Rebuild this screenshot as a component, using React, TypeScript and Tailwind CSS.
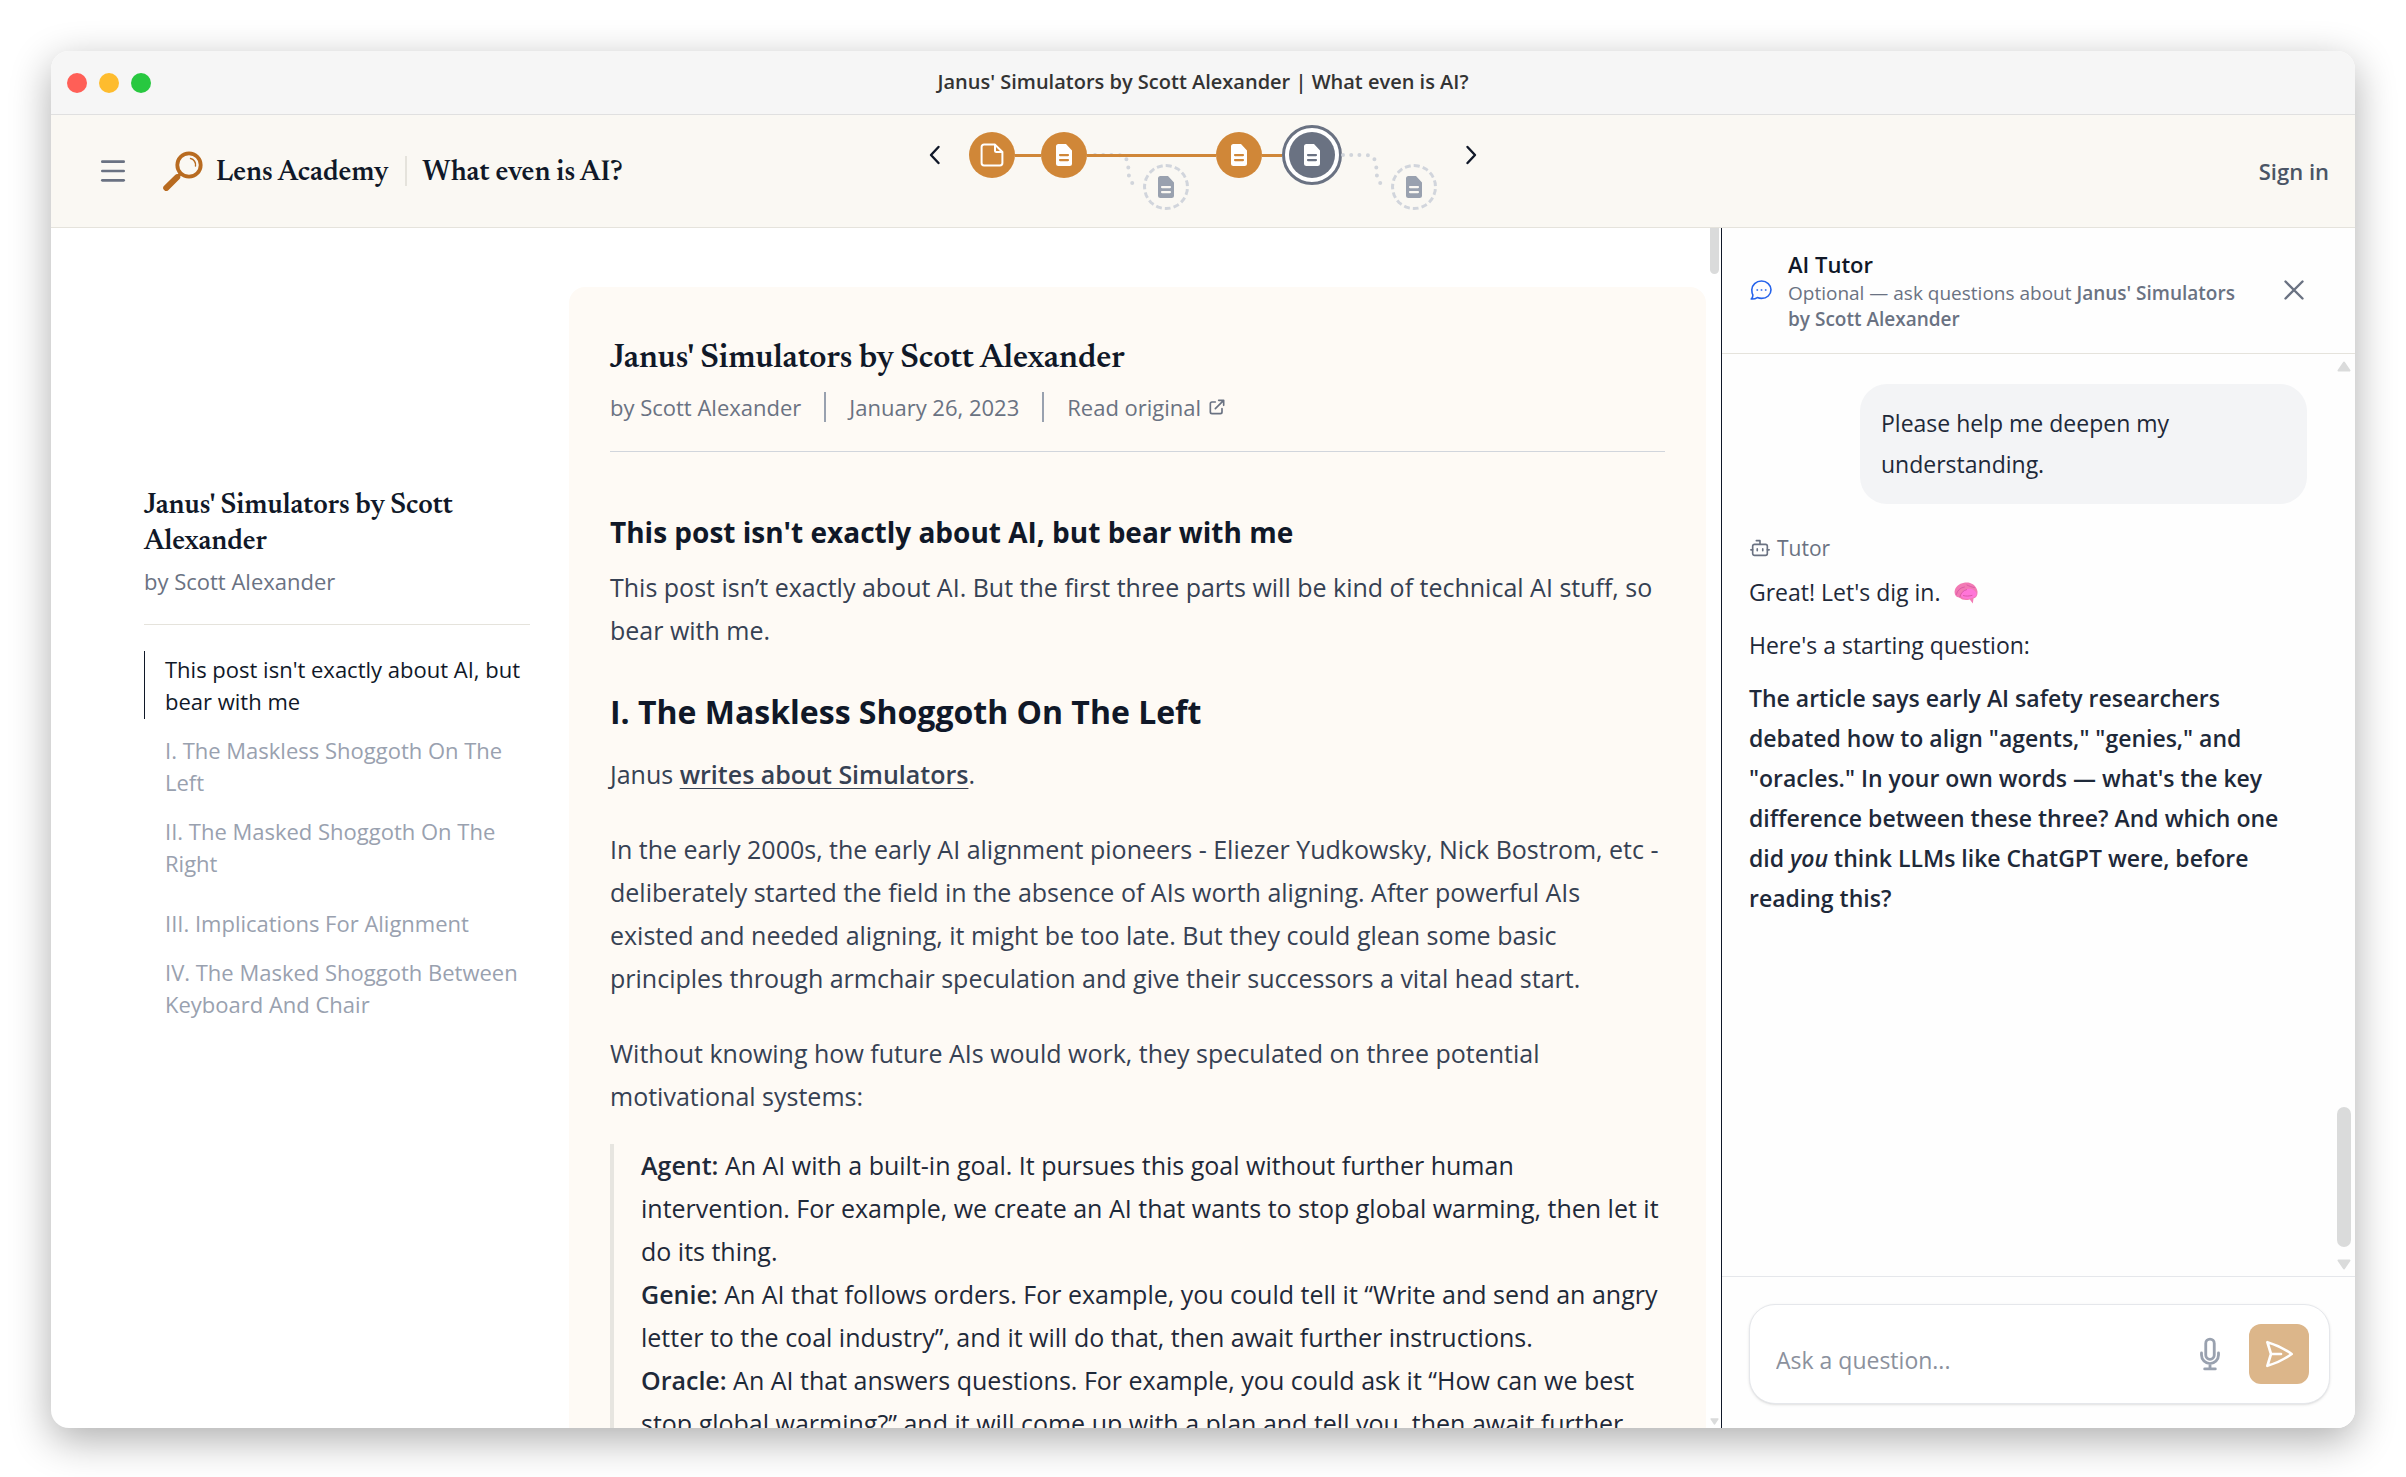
import type { ReactNode } from 'react';
import { Bot, Menu } from 'lucide-react';
import { HiOutlineMicrophone, HiOutlinePaperAirplane } from 'react-icons/hi2';

interface TocItem {
  label: string;
  active?: boolean;
  spaced?: boolean;
}

const tocItems: TocItem[] = [
  { label: "This post isn't exactly about AI, but bear with me", active: true },
  { label: 'I. The Maskless Shoggoth On The Left' },
  { label: 'II. The Masked Shoggoth On The Right' },
  { label: 'III. Implications For Alignment', spaced: true },
  { label: 'IV. The Masked Shoggoth Between Keyboard And Chair' },
];

const definitions = [
  {
    term: 'Agent:',
    text: 'An AI with a built-in goal. It pursues this goal without further human intervention. For example, we create an AI that wants to stop global warming, then let it do its thing.',
  },
  {
    term: 'Genie:',
    text: 'An AI that follows orders. For example, you could tell it “Write and send an angry letter to the coal industry”, and it will do that, then await further instructions.',
  },
  {
    term: 'Oracle:',
    text: 'An AI that answers questions. For example, you could ask it “How can we best stop global warming?” and it will come up with a plan and tell you, then await further',
  },
];

function LensLogo() {
  return (
    <svg viewBox="0 0 40 40" className="size-10 shrink-0" fill="none" strokeLinecap="round">
      <circle cx="26" cy="14" r="11.7" stroke="#b86b20" strokeWidth="3.8" />
      <path d="M17.5 22.5 L15 25.5" stroke="#b86b20" strokeWidth="3.4" />
      <path d="M14.2 26.2 L3.2 37" stroke="#b86b20" strokeWidth="6" />
      <path d="M27.5 7.5 A6.5 6.5 0 0 1 32.5 15" stroke="#b86b20" strokeWidth="1.4" />
    </svg>
  );
}

function DocIcon() {
  return (
    <svg viewBox="0 0 16 22" className="h-[22px] w-4">
      <path
        fillRule="evenodd"
        fill="currentColor"
        d="M2.5 0H10L16 6.5V19.5A2.5 2.5 0 0 1 13.5 22H2.5A2.5 2.5 0 0 1 0 19.5V2.5A2.5 2.5 0 0 1 2.5 0ZM4 10A1.1 1.1 0 0 0 4 12.2H12A1.1 1.1 0 0 0 12 10ZM4 15A1.1 1.1 0 0 0 4 17.2H12A1.1 1.1 0 0 0 12 15Z"
      />
    </svg>
  );
}

function NoteIcon() {
  return (
    <svg viewBox="0 0 24 24" className="size-6" fill="none" stroke="currentColor" strokeWidth="2" strokeLinejoin="round">
      <path d="M15 1.6H4A2.4 2.4 0 0 0 1.6 4V20A2.4 2.4 0 0 0 4 22.4H20A2.4 2.4 0 0 0 22.4 20V9Z" />
      <path d="M15 1.6V7.5A1.5 1.5 0 0 0 16.5 9H22.4" />
    </svg>
  );
}

function Chevron({ d, label }: { d: string; label: string }) {
  return (
    <button aria-label={label} className="flex size-[30px] items-center justify-center text-gray-900">
      <svg viewBox="0 0 30 30" className="size-[30px]" fill="none" stroke="currentColor" strokeWidth="2.4" strokeLinecap="round" strokeLinejoin="round">
        <path d={d} />
      </svg>
    </button>
  );
}

function StepDone({ label, children }: { label: string; children: ReactNode }) {
  return (
    <button aria-label={label} className="flex size-[46px] items-center justify-center rounded-full bg-[#d08738] text-white">
      {children}
    </button>
  );
}

// Optional lesson hanging below the main track
function Branch() {
  return (
    <div className="flex items-start">
      <svg viewBox="0 0 52 46" className="h-[46px] w-[52px]" fill="none" stroke="#d1d5db" strokeWidth="4" strokeLinecap="round" strokeDasharray="0 8.2">
        <path d="M4 12 H26 Q35 12 37 20 L38 34 Q40 42 48 43" />
      </svg>
      <button
        aria-label="Optional article"
        className="mt-[21px] flex size-[46px] items-center justify-center rounded-full border-[3px] border-dashed border-gray-300 text-gray-400"
      >
        <DocIcon />
      </button>
    </div>
  );
}

function Stepper() {
  return (
    <nav aria-label="Lesson progress" className="pb-8">
      <div className="flex h-[60px] items-center">
        <Chevron label="Previous" d="M18.5 7 L11 15 L18.5 23" />
        <div className="w-[19px]" />
        <StepDone label="Introduction">
          <NoteIcon />
        </StepDone>
        <div className="h-[3px] w-[26px] bg-[#d08738]" />
        <StepDone label="Article 1">
          <DocIcon />
        </StepDone>
        <div className="relative flex h-[60px] w-[129px] items-center">
          <div className="absolute top-[18px] right-[27px]">
            <Branch />
          </div>
          <div className="relative h-[3px] w-full bg-[#d08738]" />
        </div>
        <StepDone label="Article 2">
          <DocIcon />
        </StepDone>
        <div className="h-[3px] w-5 bg-[#d08738]" />
        <button aria-label="Current article" className="flex size-[60px] items-center justify-center rounded-full border-[3px] border-gray-500 bg-white p-1">
          <span className="flex size-[46px] shrink-0 items-center justify-center rounded-full bg-gray-500 text-white">
            <DocIcon />
          </span>
        </button>
        <div className="relative h-[60px] w-[95px]">
          <div className="absolute top-[18px] right-0">
            <Branch />
          </div>
        </div>
        <div className="w-[19px]" />
        <Chevron label="Next" d="M11.5 7 L19 15 L11.5 23" />
      </div>
    </nav>
  );
}

function TitleBar() {
  return (
    <div className="relative flex h-16 shrink-0 items-center justify-center border-b border-[#e0e0e0] bg-[#f6f6f6]">
      <div className="absolute left-4 flex gap-3">
        <span className="size-5 rounded-full bg-[#ff5f57]" />
        <span className="size-5 rounded-full bg-[#febc2e]" />
        <span className="size-5 rounded-full bg-[#28c840]" />
      </div>
      <p className="pb-[2px] text-[20px] font-semibold text-[#333]">Janus' Simulators by Scott Alexander | What even is AI?</p>
    </div>
  );
}

function Header() {
  return (
    <header className="grid h-[113px] shrink-0 grid-cols-[1fr_auto_1fr] items-center border-b border-[#e5e3dc] bg-[#faf8f3] px-[26px]">
      <div className="ml-5 flex items-center">
        <button aria-label="Menu" className="text-gray-500">
          <Menu size={32} />
        </button>
        <a href="#" className="ml-[34px] flex items-center gap-[13px]">
          <LensLogo />
          <span className="pt-1 font-[Newsreader,serif] text-[28px] font-semibold text-gray-900">Lens Academy</span>
        </a>
        <div className="mx-4 h-[30px] w-[2px] bg-[#e5e3dc]" />
        <span className="pt-1 font-[Newsreader,serif] text-[28px] font-semibold text-gray-900">What even is AI?</span>
      </div>
      <Stepper />
      <a href="#" className="justify-self-end text-[22px] font-semibold text-gray-600">
        Sign in
      </a>
    </header>
  );
}

function TableOfContents() {
  return (
    <aside className="mt-[260px] w-[386px] shrink-0">
      <h2 className="font-[Newsreader,serif] text-[28px] leading-9 font-semibold text-gray-900">
        Janus' Simulators by Scott Alexander
      </h2>
      <p className="mt-[5px] text-[22px] leading-8 text-gray-500">by Scott Alexander</p>
      <ul className="mt-[27px] flex flex-col gap-[13px] border-t border-[#e5e3dc] pt-[26px]">
        {tocItems.map((item) => (
          <li key={item.label} className={item.spaced ? 'mt-[11px]' : ''}>
            <a
              href="#"
              className={`block border-l py-[2px] pl-5 text-[22px] leading-8 ${
                item.active ? 'border-gray-900 text-gray-900' : 'border-transparent text-gray-400'
              }`}
            >
              {item.label}
            </a>
          </li>
        ))}
      </ul>
    </aside>
  );
}

function ExternalIcon() {
  return (
    <svg viewBox="0 0 24 24" className="size-5" fill="none" stroke="currentColor" strokeWidth="2" strokeLinecap="round" strokeLinejoin="round">
      <path d="M10 6H6a2 2 0 0 0-2 2v10a2 2 0 0 0 2 2h10a2 2 0 0 0 2-2v-4M14 4h6m0 0v6m0-6L10 14" />
    </svg>
  );
}

function Article() {
  return (
    <article className="mt-[59px] mr-[15px] min-w-0 flex-1 rounded-t-2xl bg-[#fefaf5] px-[41px] pt-[53px] text-[25px] leading-[43px] text-gray-700">
      <h1 className="font-[Newsreader,serif] text-[33px] leading-10 font-semibold text-gray-900">
        Janus' Simulators by Scott Alexander
      </h1>
      <div className="mt-[11px] flex items-center gap-[23px] border-b border-gray-300 pb-7 text-[22px] leading-8 text-gray-500">
        <span>by Scott Alexander</span>
        <span className="h-[30px] w-[2px] bg-gray-400" />
        <span>January 26, 2023</span>
        <span className="h-[30px] w-[2px] bg-gray-400" />
        <a href="#" className="flex items-center gap-[6px]">
          Read original <ExternalIcon />
        </a>
      </div>

      <h3 className="mt-[60px] text-[28px] leading-10 font-bold text-gray-900">
        This post isn't exactly about AI, but bear with me
      </h3>
      <p className="mt-[14px]">
        This post isn’t exactly about AI. But the first three parts will be kind of technical AI stuff, so bear with me.
      </p>

      <h2 className="mt-[38px] text-[32px] leading-[44px] font-bold text-gray-900">I. The Maskless Shoggoth On The Left</h2>
      <p className="mt-[19px]">
        Janus{' '}
        <a href="#" className="font-semibold underline decoration-1 underline-offset-4">
          writes about Simulators
        </a>
        .
      </p>
      <p className="mt-8">
        In the early 2000s, the early AI alignment pioneers - Eliezer Yudkowsky, Nick Bostrom, etc - deliberately started
        the field in the absence of AIs worth aligning. After powerful AIs existed and needed aligning, it might be too
        late. But they could glean some basic principles through armchair speculation and give their successors a vital
        head start.
      </p>
      <p className="mt-8">
        Without knowing how future AIs would work, they speculated on three potential motivational systems:
      </p>
      <blockquote className="mt-[26px] border-l-4 border-[#e7e5e0] pl-[27px] text-gray-800">
        {definitions.map((def) => (
          <p key={def.term}>
            <strong className="font-semibold">{def.term}</strong> {def.text}
          </p>
        ))}
      </blockquote>
    </article>
  );
}

function ArrowUp() {
  return (
    <svg viewBox="0 0 14 11" className="h-[11px] w-[14px] text-[#dadbdb]">
      <path d="M7 1.5 L12.5 9.5 H1.5 Z" fill="currentColor" stroke="currentColor" strokeWidth="2" strokeLinejoin="round" />
    </svg>
  );
}

function ArrowDown({ className }: { className: string }) {
  return (
    <svg viewBox="0 0 14 11" className={className}>
      <path d="M7 9.5 L12.5 1.5 H1.5 Z" fill="currentColor" stroke="currentColor" strokeWidth="2" strokeLinejoin="round" />
    </svg>
  );
}

function ChatIcon() {
  return (
    <svg viewBox="0 0 22 20" className="h-5 w-[22px]" fill="none" stroke="#2563eb" strokeWidth="1.6" strokeLinejoin="round">
      <path d="M11.5 1 C16.8 1 21 4.9 21 9.8 C21 14.8 16.8 18.4 11.5 18.4 C10 18.4 8.6 18.1 7.3 17.6 C5.5 18.8 3.3 19.2 1.2 19 C2.4 17.9 2.9 16.6 2.9 15 C2 13.6 1.8 11.8 1.8 9.8 C1.8 4.9 6.2 1 11.5 1 Z" />
      <path d="M6.5 10h1.6M10.7 10h1.6M14.9 10h1.6" />
    </svg>
  );
}

function BrainIcon() {
  return (
    <svg viewBox="0 0 24 22" className="ml-2 inline-block h-[22px] w-6 align-[-3px]" role="img" aria-label="brain">
      <path
        d="M10 .8C15 -.4 22 2 23.4 9C24 13 22.5 15.5 19.5 16.6L18.8 21.4L15.8 17.4C12 18.4 7.6 18 5.8 15.4C2.4 15.8 .4 13 .6 9.6C1 5 5 1.6 10 .8Z"
        fill="#f27ab4"
      />
      <path d="M13 7C17 6 22 8 22.5 12C22 15 19 16 16 16.4C12 17.4 8 16.6 7 13.6C7.6 10 9.6 8 13 7Z" fill="#ff75d8" />
      <path d="M2.4 12.4C3.2 8.4 6.4 5.6 10.4 5M5.8 15.2C6.4 11.4 9 8.6 12.6 7.6M9.4 13.6C12 14.4 15 14.2 18 13.4M13 3C15.6 4.4 18 5 20.4 5.6" fill="none" stroke="#db5aa8" strokeWidth="1" strokeLinecap="round" />
    </svg>
  );
}

function TutorPanel() {
  return (
    <section aria-label="AI Tutor" className="flex w-[634px] shrink-0 flex-col border-l border-gray-900 bg-[#fefefe]">
      <div className="flex items-center border-b border-[#e5e3dc] pt-5 pr-[45px] pb-[21px] pl-[28px]">
        <ChatIcon />
        <div className="ml-4 flex-1 text-[19px] leading-[26px] text-gray-500">
          <h2 className="text-[22px] leading-8 font-semibold text-gray-900">AI Tutor</h2>
          <p>
            Optional — ask questions about{' '}
            <strong className="font-semibold">
              Janus' Simulators <br />
              by Scott Alexander
            </strong>
          </p>
        </div>
        <button aria-label="Close" className="text-gray-500">
          <svg viewBox="0 0 32 32" className="size-8" fill="none" stroke="currentColor" strokeWidth="2.4" strokeLinecap="round">
            <path d="M7.5 7.5 L24.5 24.5 M24.5 7.5 L7.5 24.5" />
          </svg>
        </button>
      </div>

      <div className="relative min-h-0 flex-1 overflow-hidden pt-[30px] pr-12 pl-[27px] text-[23px] leading-10 text-gray-800">
        <p className="ml-auto w-[447px] rounded-[27px] bg-gray-100 px-[21px] py-[19px] leading-[41px]">
          Please help me deepen my understanding.
        </p>
        <div className="mt-7 flex items-center gap-[6px] text-[21px] leading-8 text-gray-500">
          <Bot size={22} strokeWidth={1.8} />
          Tutor
        </div>
        <div className="mt-2 flex flex-col gap-[13px]">
          <p>
            Great! Let's dig in. <BrainIcon />
          </p>
          <p>Here's a starting question:</p>
          <p className="font-semibold">
            The article says early AI safety researchers debated how to align "agents," "genies," and "oracles." In your
            own words — what's the key difference between these three? And which one did <em>you</em> think LLMs like
            ChatGPT were, before reading this?
          </p>
        </div>
        <div className="absolute inset-y-0 right-1 flex w-[14px] flex-col items-center pt-[7px] pb-[6px]">
          <ArrowUp />
          <div className="mt-auto mb-3 h-[140px] w-[14px] rounded-full bg-[#dadbdb]" />
          <ArrowDown className="h-[11px] w-[14px] text-[#dadbdb]" />
        </div>
      </div>

      <div className="border-t border-gray-200 pt-[27px] pr-[25px] pb-6 pl-[27px]">
        <form className="flex items-center rounded-[26px] border border-gray-200 bg-white py-[19px] pr-5 pl-[26px] shadow-sm">
          <input
            aria-label="Ask a question"
            placeholder="Ask a question..."
            className="h-[60px] min-w-0 flex-1 pt-3 text-[23px] text-gray-800 outline-none placeholder:text-[#8b919d]"
          />
          <button type="button" aria-label="Voice input" className="text-gray-400">
            <HiOutlineMicrophone size={34} strokeWidth={2} />
          </button>
          <button type="button" aria-label="Send" className="ml-[22px] flex size-[60px] items-center justify-center rounded-xl bg-[#dcb68a] text-white">
            <HiOutlinePaperAirplane size={32} strokeWidth={2} />
          </button>
        </form>
      </div>
    </section>
  );
}

export default function App() {
  return (
    <div className="h-screen bg-white px-[51px] pt-[51px] pb-[49px] font-['Open_Sans',sans-serif]">
      <div className="flex h-full flex-col overflow-hidden rounded-[18px] bg-white shadow-[0_12px_40px_rgba(0,0,0,0.32)]">
        <TitleBar />
        <Header />
        <div className="flex min-h-0 flex-1">
          <main className="relative flex min-w-0 flex-1 items-start gap-[39px] overflow-hidden pl-[93px]">
            <TableOfContents />
            <Article />
            <div className="absolute inset-y-0 right-[2px] flex w-[9px] flex-col justify-between pb-[3px]">
              <div className="h-[46px] rounded-b-full bg-[#dadbdb]" />
              <ArrowDown className="h-[7px] w-[9px] text-[#dadbdb]" />
            </div>
          </main>
          <TutorPanel />
        </div>
      </div>
    </div>
  );
}
